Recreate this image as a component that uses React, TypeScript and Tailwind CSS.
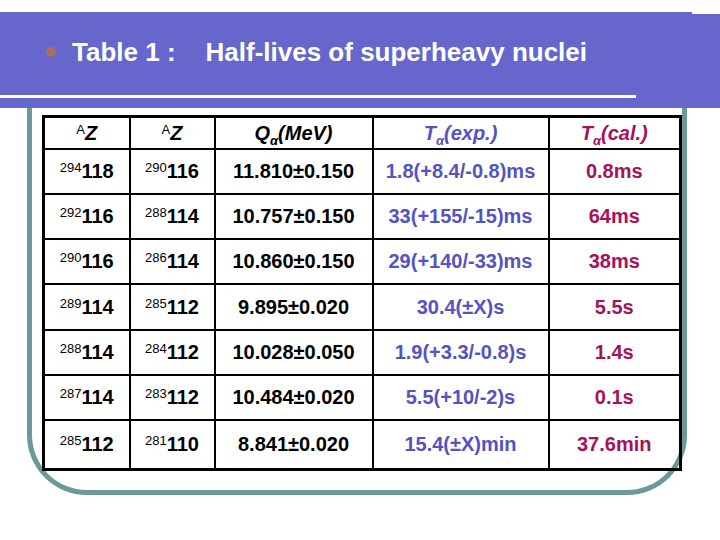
import React from "react";

type Row = {
  parentA: string;
  parentZ: string;
  daughterA: string;
  daughterZ: string;
  q: string;
  exp: string;
  cal: string;
};

const rows: Row[] = [
  { parentA: "294", parentZ: "118", daughterA: "290", daughterZ: "116", q: "11.810±0.150", exp: "1.8(+8.4/-0.8)ms", cal: "0.8ms" },
  { parentA: "292", parentZ: "116", daughterA: "288", daughterZ: "114", q: "10.757±0.150", exp: "33(+155/-15)ms", cal: "64ms" },
  { parentA: "290", parentZ: "116", daughterA: "286", daughterZ: "114", q: "10.860±0.150", exp: "29(+140/-33)ms", cal: "38ms" },
  { parentA: "289", parentZ: "114", daughterA: "285", daughterZ: "112", q: "9.895±0.020", exp: "30.4(±X)s", cal: "5.5s" },
  { parentA: "288", parentZ: "114", daughterA: "284", daughterZ: "112", q: "10.028±0.050", exp: "1.9(+3.3/-0.8)s", cal: "1.4s" },
  { parentA: "287", parentZ: "114", daughterA: "283", daughterZ: "112", q: "10.484±0.020", exp: "5.5(+10/-2)s", cal: "0.1s" },
  { parentA: "285", parentZ: "112", daughterA: "281", daughterZ: "110", q: "8.841±0.020", exp: "15.4(±X)min", cal: "37.6min" },
];

const rowHeights = ["h-[45px]", "h-[45px]", "h-[45px]", "h-[46px]", "h-[45px]", "h-[45px]", "h-[50px]"];

function Nuclide({ a, z }: { a: string; z: string }) {
  return (
    <span>
      <sup className="relative top-[-6px] text-[13px] font-normal align-baseline">{a}</sup>
      {z}
    </span>
  );
}

export default function App() {
  const cell = "border-2 border-black text-center p-0";

  return (
    <div className="relative w-[720px] h-[540px] overflow-hidden bg-white font-['Liberation_Sans',Arial,sans-serif]">
      {/* Title band */}
      <header className="relative mt-3 h-[96px] bg-[#6666cc] pt-[27px]">
        <div className="absolute right-0 top-0 h-[2px] w-[28px] bg-white" />
        <div className="flex items-center h-[26px] leading-[26px] text-white text-[26px] font-bold">
          <span className="ml-[46px] mr-[16px] h-[10px] w-[10px] rounded-full bg-[#a8705e] blur-[0.6px]" />
          <span>Table 1 :</span>
          <span className="ml-[30px]">Half-lives of superheavy nuclei</span>
        </div>
        <div className="absolute left-0 top-[83px] h-[3px] w-[636px] bg-white" />
      </header>

      {/* Rounded teal frame holding the table */}
      <div className="ml-[27px] w-[660px] border-x-[5px] border-b-[5px] border-[#6b9999] rounded-b-[60px] pt-[7px] pl-[10px] pr-[3px] pb-[19px]">
        <table className="w-[637px] table-fixed border-collapse border-[3px] border-black text-[20px] font-bold leading-none text-black">
          <colgroup>
            <col className="w-[86px]" />
            <col className="w-[85px]" />
            <col className="w-[158px]" />
            <col className="w-[176px]" />
            <col className="w-[132px]" />
          </colgroup>
          <thead>
            <tr className="h-[32px]">
              <th className={cell}>
                <sup className="relative top-[-6px] text-[13px] font-normal align-baseline">A</sup>
                <span className="italic">Z</span>
              </th>
              <th className={cell}>
                <sup className="relative top-[-6px] text-[13px] font-normal align-baseline">A</sup>
                <span className="italic">Z</span>
              </th>
              <th className={`${cell} italic`}>
                Q<sub className="relative top-[5px] text-[13px] align-baseline">α</sub>(MeV)
              </th>
              <th className={`${cell} italic text-[#5353c3]`}>
                T<sub className="relative top-[5px] text-[13px] align-baseline">α</sub>(exp.)
              </th>
              <th className={`${cell} italic text-[#a8105c]`}>
                T<sub className="relative top-[5px] text-[13px] align-baseline">α</sub>(cal.)
              </th>
            </tr>
          </thead>
          <tbody>
            {rows.map((r, i) => (
              <tr key={i} className={rowHeights[i]}>
                <td className={cell}>
                  <Nuclide a={r.parentA} z={r.parentZ} />
                </td>
                <td className={cell}>
                  <Nuclide a={r.daughterA} z={r.daughterZ} />
                </td>
                <td className={cell}>{r.q}</td>
                <td className={`${cell} text-[#5353c3]`}>{r.exp}</td>
                <td className={`${cell} text-[#a8105c]`}>{r.cal}</td>
              </tr>
            ))}
          </tbody>
        </table>
      </div>
    </div>
  );
}
